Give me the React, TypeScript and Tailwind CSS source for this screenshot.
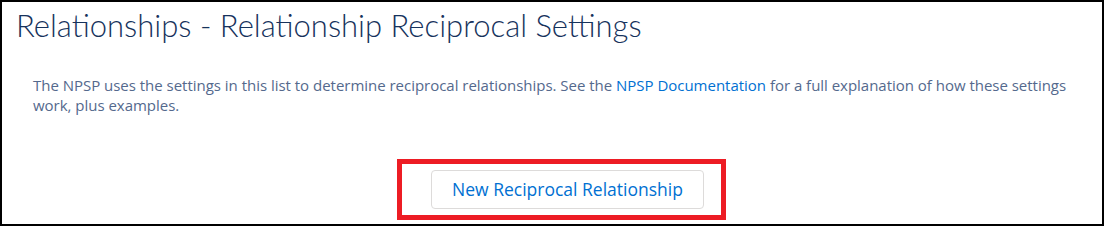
export default function App() {
  return (
    <div className="h-[226px] w-[1104px] overflow-hidden bg-white border-2 border-black font-['Open_Sans',sans-serif]">
      <h1 className="pl-[14px] pt-[5px] font-['Lato',sans-serif] text-[31px] leading-[36px] font-light text-[#16325c]">
        Relationships - Relationship Reciprocal Settings
      </h1>
      <div className="pl-[31px] pt-[32px]">
        <p className="pr-[20px] text-[15px] leading-[20px] tracking-[-0.02px] text-[#54698d]">
          The NPSP uses the settings in this list to determine reciprocal relationships. See the{' '}
          <a href="#" className="text-[#0070d2]">NPSP Documentation</a>{' '}
          for a full explanation of how these settings work, plus examples.
        </p>
        <div className="flex justify-center pt-[55px]">
          <div className="relative">
            <button
              type="button"
              className="h-[39px] w-[273px] rounded-[4px] border border-[#dddbda] bg-white text-[17.5px] text-[#0070d2]"
            >
              New Reciprocal Relationship
            </button>
            <div className="pointer-events-none absolute -left-[34px] -right-[22px] -top-[11px] -bottom-[11px] border-[5px] border-[#ed1c24]" />
          </div>
        </div>
      </div>
    </div>
  )
}
